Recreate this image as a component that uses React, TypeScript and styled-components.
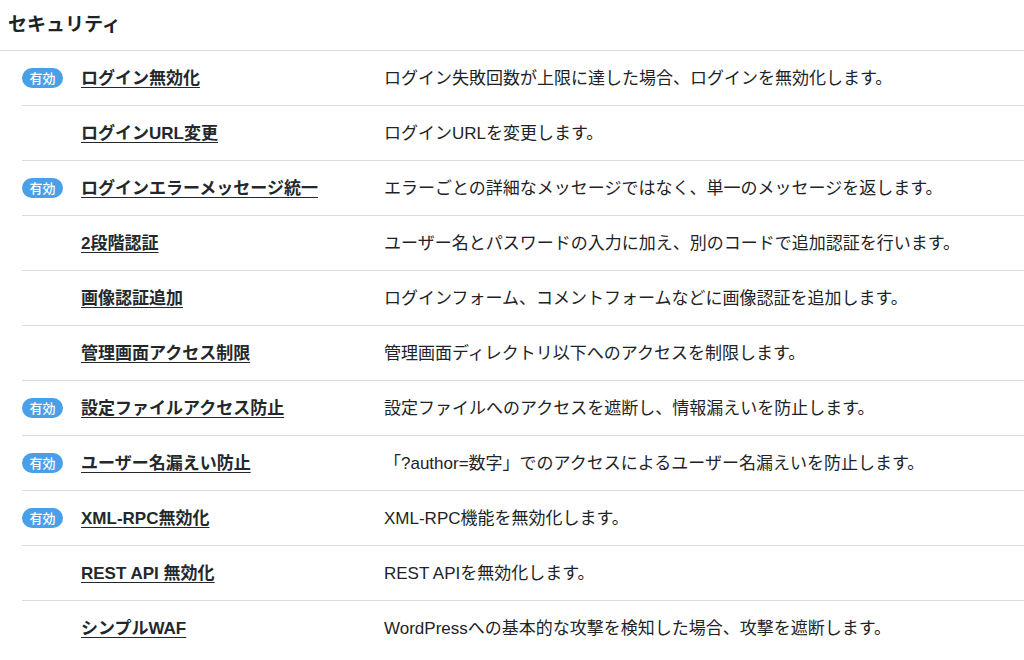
import React from "react";
import styled, { createGlobalStyle } from "styled-components";

const Global = createGlobalStyle`
  html, body { margin: 0; padding: 0; background: #fff; }
  body { font-family: "Liberation Sans", "Noto Sans CJK JP", sans-serif; color: #23282d; }
`;

const Page = styled.div`
  width: 1024px;
  height: 660px;
  overflow: hidden;
  background: #fff;
`;

const Header = styled.h2`
  margin: 0;
  height: 51px;
  padding: 0 0 6px 8px;
  box-sizing: border-box;
  display: flex;
  align-items: center;
  font-family: "Noto Sans CJK JP", sans-serif;
  font-size: 19px;
  font-weight: 700;
  color: #1d2327;
  border-bottom: 1px solid #dcdcdc;
`;

const List = styled.ul`
  list-style: none;
  margin: 0 0 0 22px;
  padding: 0;
`;

const Row = styled.li`
  display: grid;
  grid-template-columns: 59px 303px 1fr;
  align-items: center;
  box-sizing: content-box;
  height: 51px;
  padding-bottom: 3px;
  border-top: 1px solid #dcdcdc;
  &:first-child { border-top: none; }
`;

const BadgeCell = styled.div`
  display: flex;
  align-items: center;
  padding-top: 2px;
`;

const Badge = styled.span`
  display: inline-flex;
  align-items: center;
  justify-content: center;
  width: 41px;
  height: 20px;
  border-radius: 10px;
  background: #4a9fe9;
  color: #fff;
  font-family: "Noto Sans CJK JP", sans-serif;
  font-size: 13px;
  font-weight: 500;
`;

const Name = styled.a`
  font-size: 17px;
  font-weight: 700;
  color: #23282d;
  text-decoration: underline;
  text-underline-offset: 3px;
  text-decoration-thickness: 1px;
  white-space: nowrap;
`;

const Desc = styled.span`
  font-size: 17px;
  color: #1d2327;
  white-space: nowrap;
`;

const items = [
  { on: true, name: "ログイン無効化", desc: "ログイン失敗回数が上限に達した場合、ログインを無効化します。" },
  { on: false, name: "ログインURL変更", desc: "ログインURLを変更します。" },
  { on: true, name: "ログインエラーメッセージ統一", desc: "エラーごとの詳細なメッセージではなく、単一のメッセージを返します。" },
  { on: false, name: "2段階認証", desc: "ユーザー名とパスワードの入力に加え、別のコードで追加認証を行います。" },
  { on: false, name: "画像認証追加", desc: "ログインフォーム、コメントフォームなどに画像認証を追加します。" },
  { on: false, name: "管理画面アクセス制限", desc: "管理画面ディレクトリ以下へのアクセスを制限します。" },
  { on: true, name: "設定ファイルアクセス防止", desc: "設定ファイルへのアクセスを遮断し、情報漏えいを防止します。" },
  { on: true, name: "ユーザー名漏えい防止", desc: "「?author=数字」でのアクセスによるユーザー名漏えいを防止します。" },
  { on: true, name: "XML-RPC無効化", desc: "XML-RPC機能を無効化します。" },
  { on: false, name: "REST API 無効化", desc: "REST APIを無効化します。" },
  { on: false, name: "シンプルWAF", desc: "WordPressへの基本的な攻撃を検知した場合、攻撃を遮断します。" },
];

export default function App() {
  return (
    <Page>
      <Global />
      <Header>セキュリティ</Header>
      <List>
        {items.map((it) => (
          <Row key={it.name}>
            <BadgeCell>{it.on && <Badge>有効</Badge>}</BadgeCell>
            <div>
              <Name href="#">{it.name}</Name>
            </div>
            <Desc>{it.desc}</Desc>
          </Row>
        ))}
      </List>
    </Page>
  );
}
